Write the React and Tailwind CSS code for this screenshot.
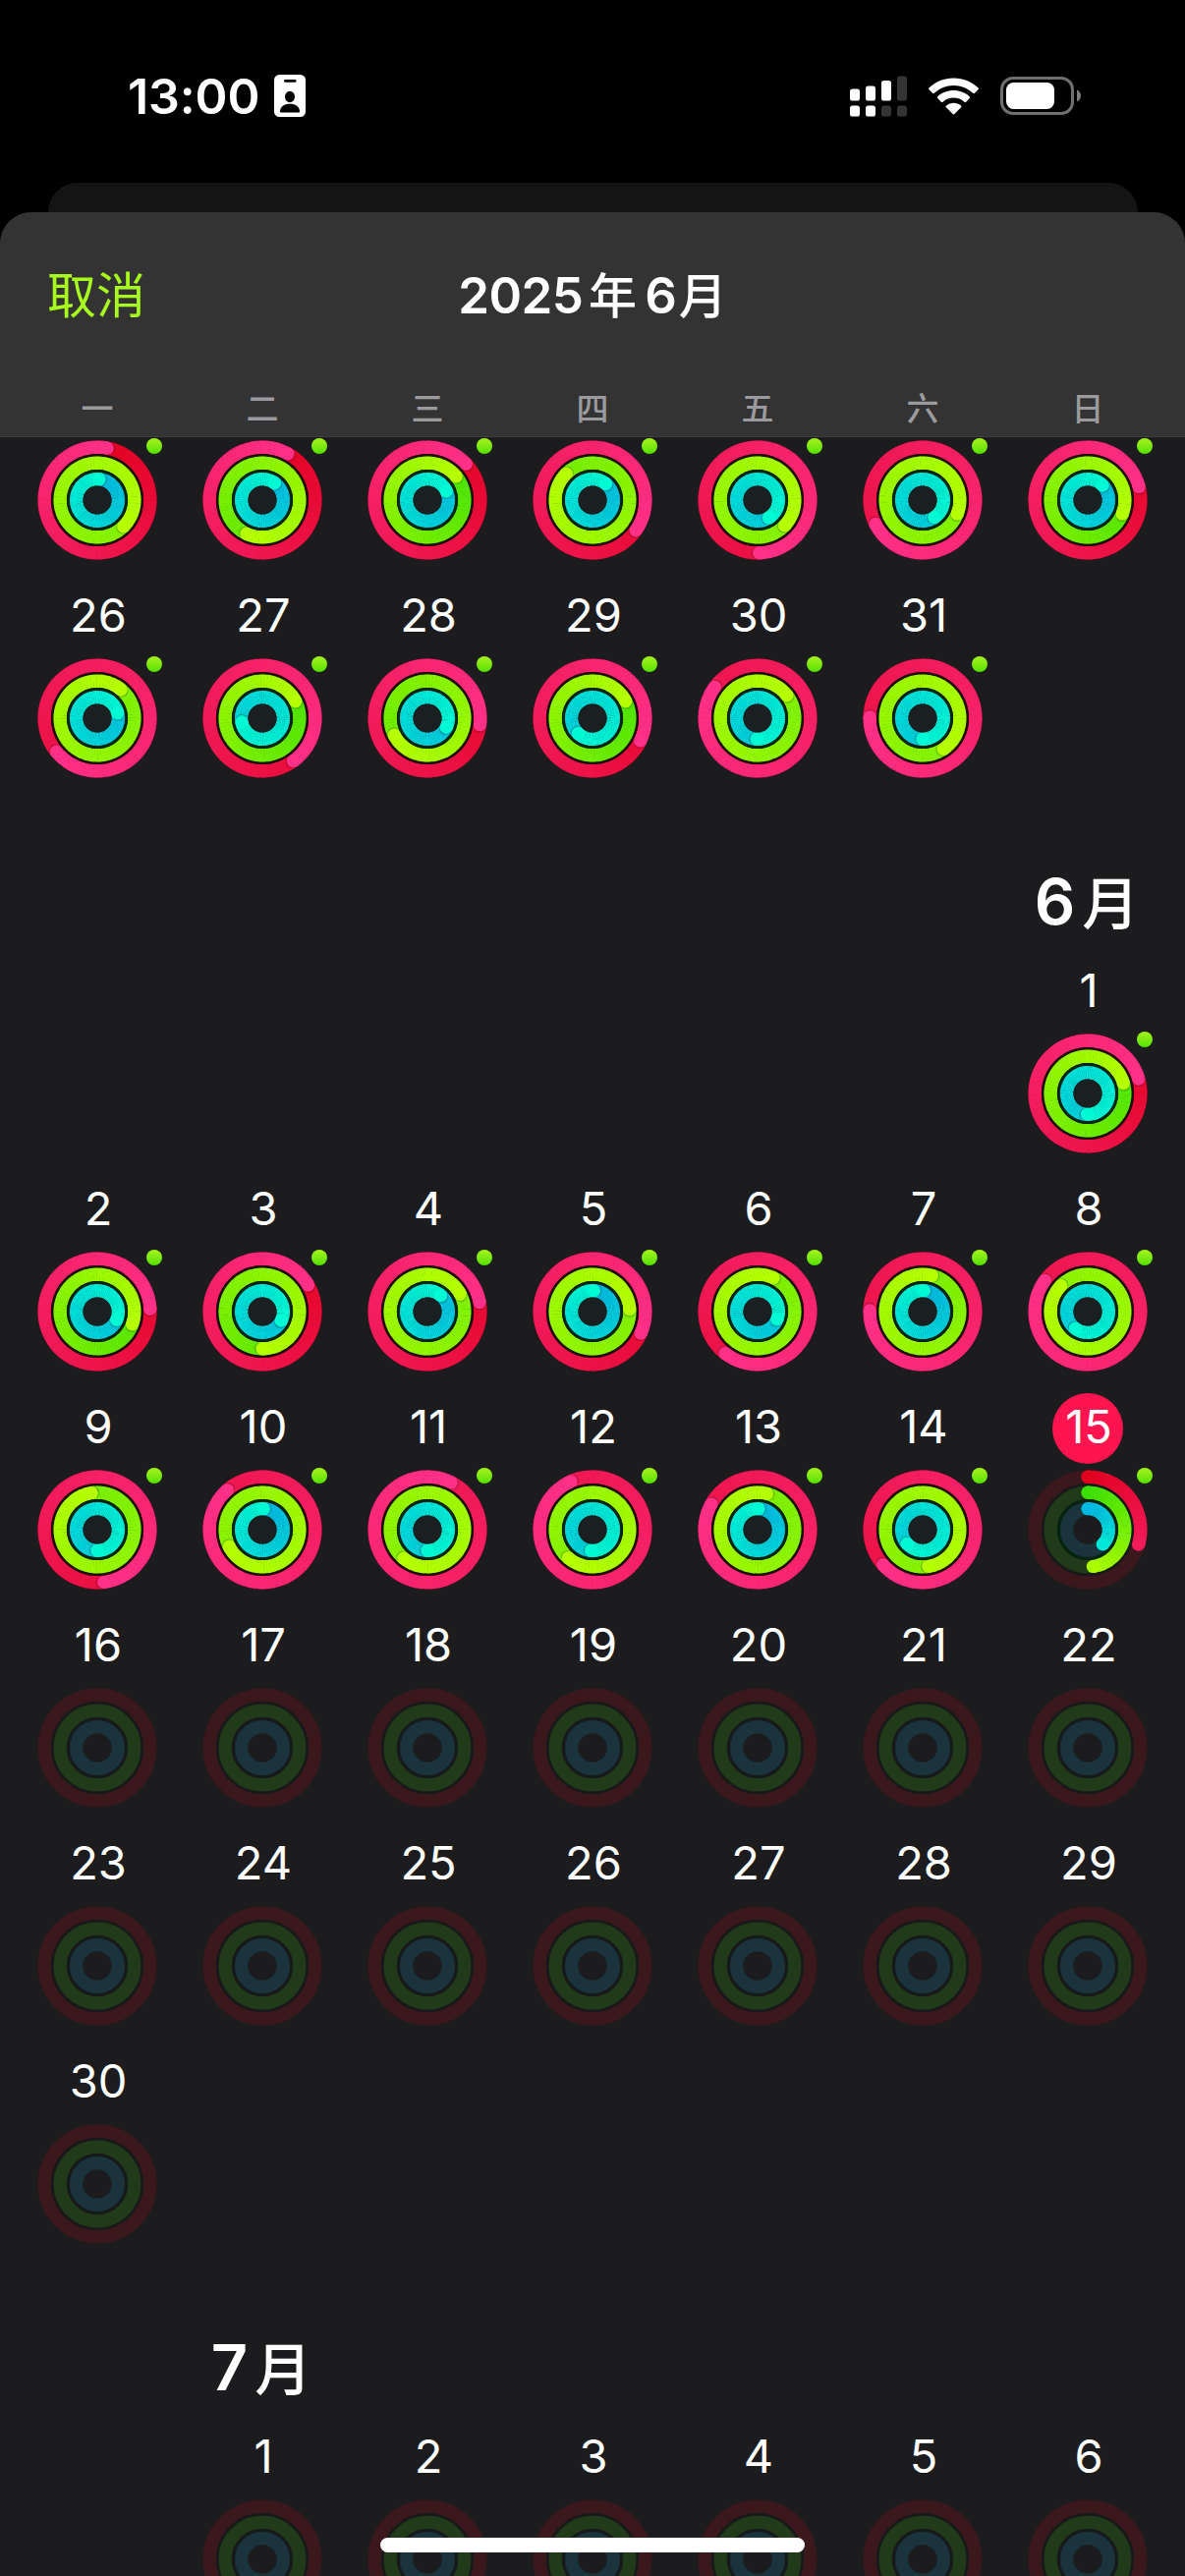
import React from 'react';

const WEEKDAYS = ['一', '二', '三', '四', '五', '六', '日'];

// move / exercise / stand progress, 1 = goal reached once
const MAY_WEEK_4 = [
  [1.03, 2.375, 1.015],
  [1.08, 1.57, 1.1],
  [1.13, 1.14, 1.18],
  [1.347, 1.875, 1.11],
  [1.495, 2.37, 1.41],
  [1.675, 2.31, 1.405],
  [1.21, 1.31, 1.125],
];

const MAY_WEEK_5 = {
  26: [1.64, 2.11, 1.21],
  27: [1.4, 1.175, 1.72],
  28: [1.27, 1.675, 1.32],
  29: [1.32, 1.175, 1.62],
  30: [1.85, 2.145, 1.505],
  31: [1.753, 2.405, 1.5],
};

const JUNE = {
  1: [1.205, 1.205, 1.503],
  2: [1.242, 1.305, 1.314],
  3: [1.166, 1.5, 1.32],
  4: [1.222, 2.172, 1.11],
  5: [1.317, 2.24, 1.01],
  6: [1.605, 2.07, 1.31],
  7: [1.753, 2.04, 1.01],
  8: [1.85, 2.872, 1.6],
  9: [1.48, 1.975, 1.5],
  10: [1.885, 2.675, 1.01],
  11: [2.074, 2.61, 1.5],
  12: [1.933, 2.613, 1.51],
  13: [1.83, 2.04, 1.008],
  14: [1.635, 2.475, 1.633],
  15: [0.295, 0.477, 0.373],
};

const RINGS = [
  { r: 53.8, from: [225, 0, 30], to: [255, 48, 136], track: '#3a181c' },
  { r: 37.8, from: [60, 224, 0], to: [182, 255, 0], track: '#213a19' },
  { r: 21.3, from: [0, 184, 226], to: [0, 250, 212], track: '#1a333d' },
];

const RING_WIDTH = 13.4;
const STEP = 5;

const point = (r, deg) => {
  const a = ((deg - 90) * Math.PI) / 180;
  return [r * Math.cos(a), r * Math.sin(a)];
};

const arc = (r, start, end) => {
  const [x1, y1] = point(r, start);
  const [x2, y2] = point(r, end);
  return `M${x1.toFixed(2)} ${y1.toFixed(2)}A${r} ${r} 0 0 1 ${x2.toFixed(2)} ${y2.toFixed(2)}`;
};

const mix = (from, to, t) => {
  const k = Math.max(0, Math.min(1, t));
  return `rgb(${from.map((c, i) => Math.round(c + (to[i] - c) * k)).join(',')})`;
};

const Ring = ({ ring, progress }) => {
  const { r, from, to } = ring;
  const end = progress * 360;
  const start = Math.max(0, end - 360);
  const scale = progress < 1 ? 1.9 / 360 : 1 / end;
  const segments = [];
  for (let a = start; a < end; a += STEP) {
    segments.push([a, Math.min(end, a + STEP)]);
  }
  const [sx, sy] = point(r, 0);
  const [ex, ey] = point(r, end);
  const [hx, hy] = point(r, end + 95 / r);

  return (
    <g fill="none" strokeWidth={RING_WIDTH}>
      {progress < 1 && <circle cx={sx} cy={sy} r={RING_WIDTH / 2} fill={mix(from, to, 0)} />}
      {segments.map(([a, b]) => (
        <path key={a} d={arc(r, a - 0.6, b)} stroke={mix(from, to, ((a + b) / 2) * scale)} />
      ))}
      {progress > 1 && <circle cx={hx} cy={hy} r={RING_WIDTH / 2 - 0.2} fill="#000" fillOpacity="0.2" />}
      <circle cx={ex} cy={ey} r={RING_WIDTH / 2} fill={mix(from, to, end * scale)} />
    </g>
  );
};

const ActivityRings = ({ data }) => {
  const full = data && data[0] > 1;
  return (
    <div className="relative w-[122px] h-[122px]">
      <svg viewBox="-61 -61 122 122" className="block w-full h-full">
        {full && <circle r="60.9" fill="#4d0b1e" />}
        {!full && <circle r="53.8" fill="none" strokeWidth={RING_WIDTH} stroke={RINGS[0].track} />}
        {full && <Ring ring={RINGS[0]} progress={data[0]} />}
        <circle r="47.1" fill={full ? '#220c08' : '#18191a'} />
        {!full && data && <Ring ring={RINGS[0]} progress={data[0]} />}
        <circle r={RINGS[1].r} fill="none" strokeWidth={RING_WIDTH} stroke={RINGS[1].track} />
        {data && <Ring ring={RINGS[1]} progress={data[1]} />}
        <circle r="31.1" fill={data ? '#04240f' : '#161a1b'} />
        <circle r={RINGS[2].r} fill="none" strokeWidth={RING_WIDTH} stroke={RINGS[2].track} />
        {data && <Ring ring={RINGS[2]} progress={data[2]} />}
        <circle r="14.5" fill={full ? '#1a1f22' : '#1c1c1e'} />
      </svg>
      {data && (
        <span className="absolute -top-[2px] left-[111px] w-[15.5px] h-[15.5px] rounded-full bg-linear-to-b from-[#a4f21c] to-[#4fe000]" />
      )}
    </div>
  );
};

const Day = ({ day, data, today }) => (
  <div className="flex flex-col items-center h-[222px]">
    <div
      className={`flex justify-center w-[72px] h-[72px] mb-[6px] rounded-full pl-[2px] text-[47px] leading-[68px] text-white ${
        today ? 'bg-[#ff1450]' : ''
      }`}
    >
      {day}
    </div>
    <ActivityRings data={data} />
  </div>
);

const Month = ({ name, titleClass, startClass, first = 1, last, today, data = {} }) => {
  const days = [];
  for (let d = first; d <= last; d++) days.push(d);

  return (
    <section>
      {name && (
        <div className="grid grid-cols-7 h-[160px]">
          <h2
            className={`flex justify-center pt-[72px] pr-[2px] text-[65px] leading-[64px] font-semibold whitespace-nowrap text-white ${titleClass}`}
          >
            {name[0]}
            <span className="ml-[7px] pt-[2px] text-[58px] font-medium">{name[1]}</span>
          </h2>
        </div>
      )}
      <div className="grid grid-cols-7">
        {days.map((d, i) => (
          <div key={d} className={i === 0 ? startClass : ''}>
            <Day day={d} data={data[d]} today={d === today} />
          </div>
        ))}
      </div>
    </section>
  );
};

const StatusBar = () => (
  <div className="flex items-center justify-between h-[186px] pt-[9px] pl-[130px] pr-[106px]">
    <div className="flex items-center">
      <span className="w-[135px] text-[50px] leading-none font-semibold tracking-[-0.1px] text-white">13:00</span>
      <svg viewBox="0 0 32 43" className="w-[32px] h-[43px] ml-[14px]">
        <rect width="32" height="43" rx="5.5" fill="#fff" />
        <rect x="10" y="5" width="12.5" height="2.8" rx="1.2" />
        <ellipse cx="16" cy="22.5" rx="5" ry="5.8" />
        <path d="M6 37.5c0-5.2 4.6-7.8 10-7.8s10 2.6 10 7.8c0 .6-.4 1-1 1H7c-.6 0-1-.4-1-1z" />
      </svg>
    </div>
    <div className="flex items-center">
      <svg viewBox="0 0 58 42" className="w-[58px] h-[42px]">
        <g fill="#fff">
          <rect x="0" y="13.5" width="10" height="12" rx="2.6" />
          <rect x="16" y="10.5" width="10" height="15" rx="2.6" />
          <rect x="32" y="5" width="10" height="20.5" rx="2.6" />
          <rect x="0" y="30.5" width="10" height="11" rx="2.6" />
          <rect x="16" y="30.5" width="10" height="11" rx="2.6" />
        </g>
        <g fill="#343434">
          <rect x="48" y="0.5" width="10" height="25" rx="2.6" />
          <rect x="32" y="30.5" width="10" height="11" rx="2.6" />
          <rect x="48" y="30.5" width="10" height="11" rx="2.6" />
        </g>
      </svg>
      <svg viewBox="0 0 51 38" className="w-[51px] h-[38px] ml-[22px]" fill="#fff">
        <path d="M25.5 .5C35.2.5 44 4.2 50.4 10.3a1.3 1.3 0 0 1 0 1.9L47 15.8a1.3 1.3 0 0 1-1.8 0A28.6 28.6 0 0 0 25.5 8 28.6 28.6 0 0 0 5.8 15.8a1.3 1.3 0 0 1-1.8 0L.6 12.2a1.3 1.3 0 0 1 0-1.9C7 4.2 15.8.5 25.5.5z" />
        <path d="M25.5 13c6.2 0 11.9 2.3 16.2 6.2a1.3 1.3 0 0 1 0 1.9l-3.5 3.6a1.3 1.3 0 0 1-1.8 0 16.2 16.2 0 0 0-21.8 0 1.3 1.3 0 0 1-1.8 0l-3.5-3.6a1.3 1.3 0 0 1 0-1.9c4.3-3.9 10-6.2 16.2-6.2z" />
        <path d="M25.5 25.7c2.8 0 5.4 1 7.5 2.7.6.5.6 1.3.1 1.8l-6.7 6.9a1.3 1.3 0 0 1-1.8 0l-6.7-6.9c-.5-.5-.5-1.3.1-1.8a11.8 11.8 0 0 1 7.5-2.7z" />
      </svg>
      <svg viewBox="0 0 82 39" className="w-[82px] h-[39px] ml-[22px]">
        <rect x="1.5" y="1.5" width="72" height="36" rx="11.5" fill="none" stroke="#6f6f6f" strokeWidth="3" />
        <rect x="6" y="6" width="49" height="27" rx="7.5" fill="#fff" />
        <path d="M78 13.5c2.4 1 4 3.3 4 6s-1.6 5-4 6z" fill="#7c7c7c" />
      </svg>
    </div>
  </div>
);

const Header = () => (
  <header className="h-[229px] shrink-0 rounded-t-[32px] bg-[#333333] border-b border-[#3e3e40]">
    <div className="grid grid-cols-[1fr_auto_1fr] items-center h-[168px] px-[48px]">
      <button className="justify-self-start pt-[2px] text-[50px] leading-none text-[#a8fa1e]">取消</button>
      <h1 className="flex items-center text-[51px] leading-none font-semibold text-white">
        <span className="tracking-[-0.6px]">2025</span>
        <span className="ml-[6px] pt-[2px] text-[49px] font-medium">年</span>
        <span className="ml-[8px]">6</span>
        <span className="ml-[2px] pt-[2px] text-[49px] font-medium">月</span>
      </h1>
    </div>
    <div className="grid grid-cols-7 h-[60px] px-[15px]">
      {WEEKDAYS.map((w) => (
        <span key={w} className="text-center text-[33px] leading-[65px] font-medium text-[#9b9b9f]">
          {w}
        </span>
      ))}
    </div>
  </header>
);

export default function App() {
  return (
    <div className="relative flex flex-col w-[1206px] h-[2622px] overflow-hidden bg-black font-['Inter','Noto_Sans_CJK_SC',sans-serif]">
      <StatusBar />
      <div className="h-[62px] shrink-0 mx-[48.5px] rounded-t-[30px] bg-[#141415]" />
      <div className="flex flex-col flex-1 min-h-0 -mt-[32px] rounded-t-[32px] bg-[#1c1c1e]">
        <Header />
        <main className="flex-1 min-h-0 overflow-hidden px-[15px] pt-[3px]">
          <div className="grid grid-cols-7 justify-items-center h-[144px]">
            {MAY_WEEK_4.map((data, i) => (
              <ActivityRings key={i} data={data} />
            ))}
          </div>
          <Month startClass="col-start-1" first={26} last={31} data={MAY_WEEK_5} />
          <Month name="6月" titleClass="col-start-7" startClass="col-start-7" last={30} today={15} data={JUNE} />
          <Month name="7月" titleClass="col-start-2" startClass="col-start-2" last={6} />
        </main>
      </div>
      <div className="absolute bottom-[24px] left-[387px] w-[432px] h-[15px] rounded-full bg-white" />
    </div>
  );
}
